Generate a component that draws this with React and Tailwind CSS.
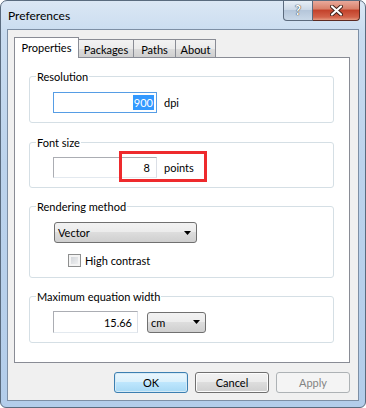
import { useState } from 'react'

const font = "font-['Segoe_UI','Lato','Liberation_Sans',sans-serif] text-[11px] leading-[15px] text-black"

const tabs = [
  { label: 'Properties', w: 'w-[65px]' },
  { label: 'Packages', w: 'w-[56px]' },
  { label: 'Paths', w: 'w-[43px]' },
  { label: 'About', w: 'w-[41px]' },
]

function Group({ label, className, children }) {
  return (
    <div className={`relative w-[305px] rounded-[3px] border border-[#d5dfe5] ${className}`}>
      <span className="absolute -top-[8px] left-[6px] bg-white px-[1px] leading-[15px]">{label}</span>
      {children}
    </div>
  )
}

function Combo({ value, className }) {
  return (
    <div
      className={`flex h-[21px] items-center justify-between rounded-[3px] border border-[#707070] bg-[linear-gradient(#f2f2f2,#ebebeb_50%,#dddddd_50%,#cfcfcf)] pl-[3px] pr-[5px] ${className}`}
    >
      <span>{value}</span>
      <svg width="7" height="4" viewBox="0 0 7 4">
        <path d="M0 0h7L3.5 4z" fill="#000" />
      </svg>
    </div>
  )
}

function Button({ children, variant }) {
  const styles = {
    default: 'border-[#3c7fb1] bg-[linear-gradient(#eaf6fd,#d9f0fc_50%,#bee6fd_50%,#a7d9f5)] shadow-[inset_0_0_0_1px_#d5eaf6]',
    normal: 'border-[#707070] bg-[linear-gradient(#f2f2f2,#ebebeb_50%,#dddddd_50%,#cfcfcf)] shadow-[inset_0_0_0_1px_#fcfcfc]',
    disabled: 'border-[#adb2b5] bg-[#f4f4f4] text-[#838383]',
  }
  return (
    <button
      type="button"
      className={`flex h-[21px] w-[74px] items-center justify-center rounded-[3px] border ${styles[variant]}`}
    >
      {children}
    </button>
  )
}

export default function App() {
  const [tab] = useState('Properties')

  return (
    <div className={`${font} h-[408px] w-[366px] overflow-hidden`}>
      <div className="flex h-[408px] flex-col rounded-t-[7px] rounded-b-[6px] border border-[#5a6b7e] bg-[linear-gradient(180deg,#dbe7f4_0%,#c9dcf0_8%,#bcd3ec_40%,#b3cdea_100%)]">
        {/* title bar */}
        <div className="flex h-[28px] items-start">
          <span className="pl-[7px] pt-[7px] text-[12px]">Preferences</span>
          <div className="ml-auto mr-[5px] flex">
            <div className="flex h-[20px] w-[30px] items-center justify-center rounded-bl-[4px] border border-t-0 border-[#5b6a7d] bg-[linear-gradient(#e7eef6,#cdd9e7_45%,#b5c6da_50%,#c9d8e8)]">
              <span className="text-[13px] font-bold leading-none text-white [text-shadow:0_0_1px_#333,0_0_1px_#333]">?</span>
            </div>
            <div className="flex h-[20px] w-[47px] items-center justify-center rounded-br-[4px] border border-l-0 border-t-0 border-[#5b2a22] bg-[linear-gradient(#e9a99b,#d9826c_40%,#c4432c_50%,#d3634b_85%,#e59a80)]">
              <svg width="13" height="11" viewBox="0 0 13 11">
                <path d="M2 1.5l9 8M11 1.5l-9 8" stroke="#3d2019" strokeWidth="4" strokeLinecap="round" />
                <path d="M2 1.5l9 8M11 1.5l-9 8" stroke="#fff" strokeWidth="2.2" strokeLinecap="round" />
              </svg>
            </div>
          </div>
        </div>

        {/* client area */}
        <div className="mx-[6px] flex h-[372px] flex-col border border-[#7d8fa5] bg-[#f0f0f0] pl-[6px] pr-[8px] pt-[7px]">
          <div className="flex items-end">
            {tabs.map((t) =>
              t.label === tab ? (
                <div
                  key={t.label}
                  className={`relative z-10 -mb-px flex h-[21px] items-center justify-center border border-b-0 border-[#898c95] bg-white pb-[2px] ${t.w}`}
                >
                  {t.label}
                </div>
              ) : (
                <div
                  key={t.label}
                  className={`-ml-px flex h-[18px] items-center justify-center border border-b-0 border-[#898c95] bg-[linear-gradient(#f2f2f2,#ebebeb_50%,#dddddd_50%,#cfcfcf)] pt-[2px] ${t.w}`}
                >
                  {t.label}
                </div>
              )
            )}
          </div>

          <div className="flex h-[306px] flex-col border border-[#898c95] bg-white pl-[14px] pt-[18px]">
            <Group label="Resolution" className="h-[47px] pl-[23px] pt-[15px]">
              <div className="flex items-center">
                <div className="flex h-[21px] w-[104px] items-center justify-end border border-[#569de5] pr-[2px]">
                  <span className="bg-[#3399ff] px-[1px] text-white">900</span>
                </div>
                <span className="ml-[7px]">dpi</span>
              </div>
            </Group>

            <Group label="Font size" className="relative mt-[19px] h-[46px] pl-[23px] pt-[14px]">
              <div className="flex items-center">
                <div className="flex h-[21px] w-[104px] items-center justify-end border border-[#abadb3] border-b-[#e3e9ef] border-r-[#dbdfe6] pr-[6px]">
                  8
                </div>
                <span className="ml-[7px]">points</span>
              </div>
              <div className="absolute left-[89px] top-[8px] h-[31px] w-[88px] border-[3px] border-[#ee2a2d]" />
            </Group>

            <Group label="Rendering method" className="mt-[18px] h-[72px] pl-[24px] pt-[15px]">
              <Combo value="Vector" className="w-[143px]" />
              <div className="ml-[14px] mt-[10px] flex items-center gap-[4px]">
                <span className="h-[13px] w-[13px] border border-[#8e8f8f] bg-[linear-gradient(135deg,#cbcfd5,#f6f6f6)] shadow-[inset_0_0_0_2px_#f4f4f4]" />
                <span>High contrast</span>
              </div>
            </Group>

            <Group label="Maximum equation width" className="mt-[18px] h-[47px] pl-[23px] pt-[14px]">
              <div className="flex items-center">
                <div className="flex h-[22px] w-[85px] items-center justify-end border border-[#abadb3] border-b-[#e3e9ef] border-r-[#dbdfe6] pr-[5px]">
                  15.66
                </div>
                <Combo value="cm" className="ml-[9px] w-[59px]" />
              </div>
            </Group>
          </div>

          <div className="mt-[9px] flex justify-end gap-[7px]">
            <Button variant="default">OK</Button>
            <Button variant="normal">Cancel</Button>
            <Button variant="disabled">Apply</Button>
          </div>
        </div>
      </div>
    </div>
  )
}
